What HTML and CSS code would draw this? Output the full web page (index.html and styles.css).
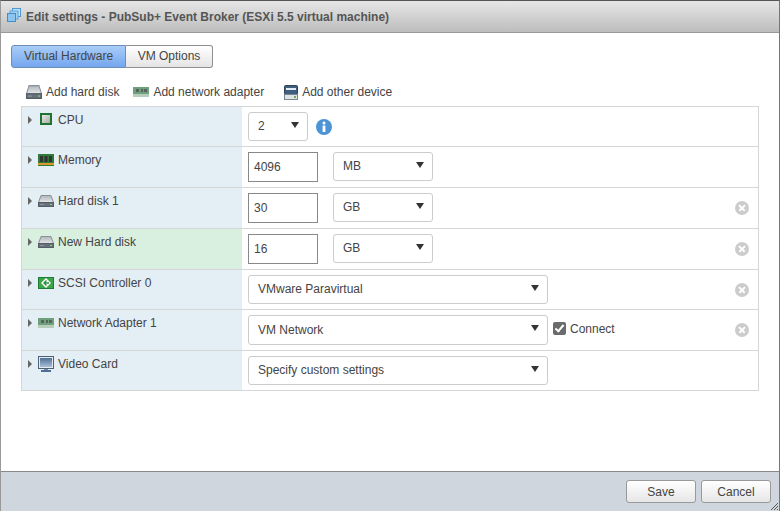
FILE: index.html
```html
<!DOCTYPE html>
<html lang="en">
<head>
  <meta charset="UTF-8">
  <title>Edit settings</title>
  <link rel="stylesheet" href="styles.css">
</head>
<body>
  <svg class="sprites" width="0" height="0">
    <defs>
      <linearGradient id="disk-top" x1="0" y1="0" x2="0" y2="1">
        <stop offset="0" stop-color="#aeb5bb"/>
        <stop offset="1" stop-color="#e6e8ea"/>
      </linearGradient>
      <linearGradient id="cpu-core" x1="0" y1="0" x2="1" y2="1">
        <stop offset="0" stop-color="#e8e8e6"/>
        <stop offset="1" stop-color="#a9aca8"/>
      </linearGradient>
      <linearGradient id="screen" x1="0" y1="0" x2="0" y2="1">
        <stop offset="0" stop-color="#4f6f96"/>
        <stop offset="1" stop-color="#a9bfd6"/>
      </linearGradient>
    </defs>
    <symbol id="i-disk" viewBox="0 0 16 12" preserveAspectRatio="none">
      <path d="M3 .5h10l2.5 7h-15z" fill="url(#disk-top)" stroke="#8a9096"/>
      <rect x=".5" y="7.5" width="15" height="4" fill="#66707a" stroke="#555e67"/>
      <rect x="12" y="9" width="2" height="1" fill="#8fd07a"/>
      <rect x="2" y="9" width="4" height="1" fill="#8c949c"/>
    </symbol>
    <symbol id="i-nic" viewBox="0 0 16 10">
      <rect width="16" height="7" fill="#6f9f7c"/>
      <rect y="7" width="16" height="3" fill="#b5cdb9"/>
      <rect x="3" y="2" width="3" height="3" fill="#56655b"/>
      <rect x="8" y="2" width="2" height="3" fill="#56655b"/>
      <rect x="11" y="2" width="3" height="3" fill="#56655b"/>
    </symbol>
  </svg>

  <div class="dialog">
    <div class="titlebar">
      <svg class="title-icon" width="14" height="14" viewBox="0 0 14 14">
        <rect x="5.5" y=".5" width="8" height="8" fill="#bfe0f8" stroke="#4d9ad4"/>
        <rect x="3" y="3" width="8" height="8" fill="#a3d0f2" stroke="#5aa5dd"/>
        <rect x=".5" y="5.5" width="8" height="8" fill="#8cc6f0" stroke="#3f8ecb"/>
      </svg>
      <span>Edit settings - PubSub+ Event Broker (ESXi 5.5 virtual machine)</span>
    </div>

    <div class="content">
      <div class="tabs">
        <div class="tab tab-active">Virtual Hardware</div>
        <div class="tab">VM Options</div>
      </div>

      <div class="toolbar">
        <div class="tool"><svg width="16" height="14"><use href="#i-disk"/></svg>Add hard disk</div>
        <div class="tool"><svg width="16" height="10"><use href="#i-nic"/></svg>Add network adapter</div>
        <div class="tool tool-other">
          <svg width="14" height="15" viewBox="0 0 14 15">
            <rect x=".5" y=".5" width="13" height="9" rx="1" fill="#3f5f80" stroke="#2f4357"/>
            <rect x="2" y="3" width="10" height="2" fill="#e3ebf2"/>
            <rect x=".5" y="9.5" width="13" height="5" fill="#dfe3e6" stroke="#7b858e"/>
            <rect x="10" y="11" width="2" height="2" fill="#62b346"/>
          </svg>
          Add other device
        </div>
      </div>

      <div class="hw-table">
        <div class="hw-row">
          <div class="hw-label">
            <span class="arrow"></span>
            <svg class="hw-icon ic-cpu" width="12" height="12" viewBox="0 0 12 12">
              <rect width="12" height="12" fill="#1d7431"/>
              <rect x="2" y="2" width="8" height="8" fill="url(#cpu-core)"/>
            </svg>
            CPU
          </div>
          <div class="hw-value">
            <div class="select sel-cpu"><select><option>2</option></select></div>
            <svg class="info" width="16" height="16" viewBox="0 0 16 16">
              <circle cx="8" cy="8" r="8" fill="#4d94d6"/>
              <circle cx="8" cy="4" r="1.5" fill="#fff"/>
              <rect x="6.6" y="6.5" width="2.8" height="6.5" fill="#fff"/>
            </svg>
          </div>
        </div>

        <div class="hw-row">
          <div class="hw-label">
            <span class="arrow"></span>
            <svg class="hw-icon" width="16" height="12" viewBox="0 0 16 12">
              <rect width="16" height="9" fill="#2f7a3a"/>
              <rect x="2" y="2" width="3" height="6" fill="#333"/>
              <rect x="6.5" y="2" width="3" height="6" fill="#333"/>
              <rect x="11" y="2" width="3" height="6" fill="#333"/>
              <rect y="9" width="16" height="2" fill="#d99a2b"/>
              <rect y="11" width="16" height="1" fill="#2f7a3a"/>
            </svg>
            Memory
          </div>
          <div class="hw-value">
            <input class="num" type="text" value="4096">
            <div class="select sel-unit"><select><option>MB</option></select></div>
          </div>
        </div>

        <div class="hw-row">
          <div class="hw-label">
            <span class="arrow"></span>
            <svg class="hw-icon" width="16" height="12"><use href="#i-disk"/></svg>
            Hard disk 1
          </div>
          <div class="hw-value">
            <input class="num" type="text" value="30">
            <div class="select sel-unit"><select><option>GB</option></select></div>
            <span class="remove"></span>
          </div>
        </div>

        <div class="hw-row hw-row-new">
          <div class="hw-label">
            <span class="arrow"></span>
            <svg class="hw-icon" width="16" height="12"><use href="#i-disk"/></svg>
            New Hard disk
          </div>
          <div class="hw-value">
            <input class="num" type="text" value="16">
            <div class="select sel-unit"><select><option>GB</option></select></div>
            <span class="remove"></span>
          </div>
        </div>

        <div class="hw-row">
          <div class="hw-label">
            <span class="arrow"></span>
            <svg class="hw-icon" width="16" height="12" viewBox="0 0 16 12">
              <rect x=".5" y=".5" width="15" height="11" fill="#3aa648" stroke="#1f7a35"/>
              <path d="M8 1l5 5-5 5-5-5z" fill="#fff"/>
              <path d="M8.5 3.5L6 6l2.5 2.5M6 6h5" fill="none" stroke="#2a8f3c" stroke-width="1.4"/>
            </svg>
            SCSI Controller 0
          </div>
          <div class="hw-value">
            <div class="select sel-wide"><select><option>VMware Paravirtual</option></select></div>
            <span class="remove"></span>
          </div>
        </div>

        <div class="hw-row">
          <div class="hw-label">
            <span class="arrow"></span>
            <svg class="hw-icon ic-nic" width="16" height="10"><use href="#i-nic"/></svg>
            Network Adapter 1
          </div>
          <div class="hw-value">
            <div class="select sel-wide sel-tall"><select><option>VM Network</option></select></div>
            <label class="connect"><span class="check"></span>Connect</label>
            <span class="remove"></span>
          </div>
        </div>

        <div class="hw-row">
          <div class="hw-label">
            <span class="arrow"></span>
            <svg class="hw-icon ic-video" width="16" height="16" viewBox="0 0 16 16">
              <rect x=".5" y=".5" width="15" height="12" fill="#e6ebf0" stroke="#4b5f75"/>
              <rect x="2" y="2" width="12" height="9" fill="url(#screen)"/>
              <rect x="6" y="13" width="4" height="1" fill="#7b8c9e"/>
              <rect x="3" y="14" width="10" height="2" fill="#4b6f96"/>
            </svg>
            Video Card
          </div>
          <div class="hw-value">
            <div class="select sel-wide"><select><option>Specify custom settings</option></select></div>
          </div>
        </div>
      </div>
    </div>

    <div class="footer">
      <button class="btn">Save</button>
      <button class="btn">Cancel</button>
      <svg class="grip" width="7" height="7" viewBox="0 0 7 7">
        <path d="M7 0L0 7M7 3L3 7M7 6L6 7" stroke="#555" fill="none"/>
      </svg>
    </div>
  </div>
</body>
</html>
```

FILE: styles.css
```css
html, body {
  margin: 0;
  height: 100%;
}
body {
  font-family: "Liberation Sans", Arial, sans-serif;
  font-size: 12px;
  color: #444;
  overflow: hidden;
}
.sprites {
  display: block;
  height: 0;
}
.dialog {
  box-sizing: border-box;
  height: 511px;
  display: flex;
  flex-direction: column;
  background: white;
  border-top: 1px solid #555;
  border-left: 1px solid #999;
  border-right: 1px solid #777;
}

.titlebar {
  height: 32px;
  box-sizing: border-box;
  display: flex;
  align-items: center;
  padding-left: 6px;
  gap: 5px;
  font-weight: bold;
  color: #555;
  background: linear-gradient(#e6e6e6, #bdbdbd);
  border-bottom: 1px solid #999;
}
.title-icon {
  margin-top: -3px;
}

.content {
  flex: 1;
  padding: 12px 20px 0 10px;
}

.tabs {
  display: flex;
}
.tab {
  height: 21px;
  line-height: 21px;
  width: 86px;
  text-align: center;
  border: 1px solid #8f8f8f;
  border-left: none;
  border-radius: 0 3px 3px 0;
  background: linear-gradient(#fff, #e4e4e4);
}
.tab-active {
  width: 113px;
  border-left: 1px solid #6b8fb8;
  border-color: #6b8fb8;
  border-radius: 3px 0 0 3px;
  background: linear-gradient(#a9cdf8, #74a6ee);
}

.toolbar {
  display: flex;
  align-items: center;
  height: 20px;
  margin: 14px 0 4px 15px;
  gap: 14px;
}
.tool {
  display: flex;
  align-items: center;
  gap: 4px;
}
.tool-other {
  margin-left: 6px;
}

.hw-table {
  margin-left: 10px;
  border: 1px solid #d6d6d6;
  border-bottom: none;
}
.hw-row {
  display: flex;
  border-bottom: 1px solid #d6d6d6;
}
.hw-label {
  width: 220px;
  flex: none;
  box-sizing: border-box;
  display: flex;
  align-items: flex-start;
  padding: 7px 0 0 6px;
  line-height: 13px;
  background: #e4eef5;
}
.hw-row-new .hw-label {
  background: #d9efdf;
}
.arrow {
  width: 0;
  height: 0;
  margin: 2px 6px 0 0;
  border-left: 4px solid #666;
  border-top: 4px solid transparent;
  border-bottom: 4px solid transparent;
}
.hw-icon {
  margin-right: 4px;
}
.ic-cpu {
  margin: -1px 6px 0 2px;
}
.ic-nic {
  margin-top: 1px;
}
.ic-video {
  margin-top: -2px;
}
.hw-value {
  flex: 1;
  display: flex;
  align-items: flex-start;
  padding: 5px 0 5px 6px;
  position: relative;
}

.num {
  box-sizing: border-box;
  width: 70px;
  height: 30px;
  margin: 0 15px 0 0;
  padding: 0 5px;
  border: 1px solid #888;
  font: inherit;
  color: #444;
}
.select {
  position: relative;
  height: 29px;
}
.select select {
  appearance: none;
  box-sizing: border-box;
  width: 100%;
  height: 100%;
  padding: 0 9px 2px;
  border: 1px solid #ccc;
  border-radius: 3px;
  background: white;
  font: inherit;
  color: #444;
}
.select::after {
  content: "";
  position: absolute;
  right: 9px;
  top: 10px;
  border-top: 6px solid #333;
  border-left: 4px solid transparent;
  border-right: 4px solid transparent;
}
.sel-cpu { width: 60px; }
.sel-unit { width: 100px; }
.sel-wide { width: 300px; }
.sel-tall { height: 30px; }
.select.sel-tall select {
  padding-bottom: 0;
}

.info {
  margin: 7px 0 0 8px;
}
.connect {
  box-sizing: border-box;
  height: 30px;
  padding-bottom: 3px;
  display: flex;
  align-items: center;
  margin-left: 5px;
  gap: 4px;
}
.check {
  box-sizing: border-box;
  width: 13px;
  height: 13px;
  border-radius: 2px;
  background: #6b6b6b;
  position: relative;
}
.check::after {
  content: "";
  position: absolute;
  left: 4px;
  top: 1px;
  width: 3px;
  height: 7px;
  border: solid white;
  border-width: 0 2px 2px 0;
  transform: rotate(40deg);
}
.remove {
  position: absolute;
  right: 9px;
  top: 13px;
  width: 14px;
  height: 14px;
  border-radius: 50%;
  background: #ccc;
}
.remove::before, .remove::after {
  content: "";
  position: absolute;
  left: 3px;
  top: 6.25px;
  width: 8px;
  height: 1.5px;
  background: white;
  transform: rotate(45deg);
}
.remove::after {
  transform: rotate(-45deg);
}

.footer {
  height: 40px;
  box-sizing: border-box;
  display: flex;
  justify-content: flex-end;
  gap: 5px;
  padding: 8px 8px 0 0;
  background: #cfd6de;
  border-top: 1px solid #888;
  position: relative;
}
.btn {
  width: 70px;
  height: 23px;
  padding: 0;
  border: 1px solid #999;
  border-radius: 3px;
  background: linear-gradient(#fff, #e6e6e6);
  font: inherit;
  color: #444;
}
.grip {
  position: absolute;
  right: 1px;
  bottom: 1px;
}
```
